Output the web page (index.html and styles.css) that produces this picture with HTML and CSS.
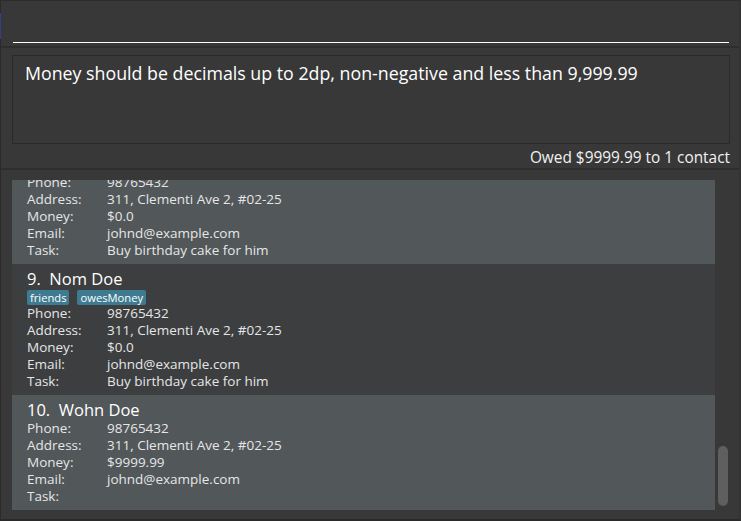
FILE: index.html
```html
<!DOCTYPE html>
<html>
<head>
<meta charset="utf-8">
<link rel="stylesheet" href="styles.css">
</head>
<body>
<div class="app">
  <div class="edge-mark"></div>
  <div class="command">
    <div class="command-line"></div>
  </div>
  <div class="result-area">
    <div class="result-box">Money should be decimals up to 2dp, non-negative and less than 9,999.99</div>
    <div class="summary">Owed $9999.99 to 1 contact</div>
  </div>
  <div class="list-area">
    <div class="list-viewport">
      <div class="card light">
        <div class="name">8.&nbsp; Mohn Doe</div>
        <div class="row"><span class="label">Phone:</span><span>98765432</span></div>
        <div class="row"><span class="label">Address:</span><span>311, Clementi Ave 2, #02-25</span></div>
        <div class="row"><span class="label">Money:</span><span>$0.0</span></div>
        <div class="row"><span class="label">Email:</span><span>johnd@example.com</span></div>
        <div class="row"><span class="label">Task:</span><span>Buy birthday cake for him</span></div>
      </div>
      <div class="card dark">
        <div class="name">9.&nbsp; Nom Doe</div>
        <div class="tags"><span class="tag">friends</span><span class="tag">owesMoney</span></div>
        <div class="row"><span class="label">Phone:</span><span>98765432</span></div>
        <div class="row"><span class="label">Address:</span><span>311, Clementi Ave 2, #02-25</span></div>
        <div class="row"><span class="label">Money:</span><span>$0.0</span></div>
        <div class="row"><span class="label">Email:</span><span>johnd@example.com</span></div>
        <div class="row"><span class="label">Task:</span><span>Buy birthday cake for him</span></div>
      </div>
      <div class="card light">
        <div class="name">10.&nbsp; Wohn Doe</div>
        <div class="row"><span class="label">Phone:</span><span>98765432</span></div>
        <div class="row"><span class="label">Address:</span><span>311, Clementi Ave 2, #02-25</span></div>
        <div class="row"><span class="label">Money:</span><span>$9999.99</span></div>
        <div class="row"><span class="label">Email:</span><span>johnd@example.com</span></div>
        <div class="row"><span class="label">Task:</span><span></span></div>
      </div>
    </div>
    <div class="scrollbar"><div class="thumb"></div></div>
  </div>
</div>
</body>
</html>
```

FILE: styles.css
```css
html, body {
  margin: 0;
  padding: 0;
  background: #383838;
  height: 521px;
  overflow: hidden;
}

.app {
  position: relative;
  height: 521px;
  box-sizing: border-box;
  border-top: 1px solid #2c2c2c;
  border-left: 1px solid #2a2a2a;
  border-right: 2px solid #333333;
  border-bottom: 2px solid #2a2a2a;
  display: flex;
  flex-direction: column;
  font-family: "Open Sans", "Liberation Sans", sans-serif;
  color: #ffffff;
}

.edge-mark {
  position: absolute;
  left: -1px;
  top: 12px;
  width: 1px;
  height: 26px;
  background: #3b3b8c;
}

.command {
  height: 47px;
  box-sizing: border-box;
  padding: 41px 10px 0 12px;
  border-bottom: 2px solid #2e2e2e;
}

.command-line {
  height: 1px;
  background: #ffffff;
}

.result-area {
  padding: 7px 9px 0 11px;
  border-bottom: 2px solid #2e2e2e;
}

.result-box {
  height: 89px;
  box-sizing: border-box;
  border: 1px solid #2a2a2a;
  padding: 6px 12px;
  font-size: 17.8px;
  line-height: 22px;
  color: #ffffff;
}

.summary {
  text-align: right;
  font-size: 15.4px;
  line-height: 18px;
  padding: 5px 0 1px;
  color: #f2f2f2;
}

.list-area {
  flex: 1;
  display: flex;
  padding: 10px 0 9px 11px;
  min-height: 0;
}

.list-viewport {
  flex: 0 0 703px;
  overflow: hidden;
  display: flex;
  flex-direction: column;
  justify-content: flex-end;
}

.card {
  flex: none;
  padding: 5px 15px 5px;
  font-size: 13.5px;
  color: #e6e6e6;
}

.card.light { background: #52575a; }
.card.dark { background: #3c3e40; }

.name {
  font-size: 16.5px;
  line-height: 20px;
  color: #ffffff;
}

.tags {
  display: flex;
  gap: 8px;
  height: 16px;
  align-items: center;
}

.tag {
  background: #3e7b91;
  color: #ffffff;
  font-size: 11.2px;
  line-height: 15px;
  padding: 0 3px;
  border-radius: 2px;
}

.row {
  display: flex;
  line-height: 17px;
  height: 17px;
}

.label {
  width: 80px;
  flex: none;
}

.scrollbar {
  flex: 1;
  position: relative;
}

.thumb {
  position: absolute;
  left: 3px;
  width: 10px;
  bottom: 4px;
  height: 60px;
  background: #5f5f5f;
  border-radius: 5px;
}
```
